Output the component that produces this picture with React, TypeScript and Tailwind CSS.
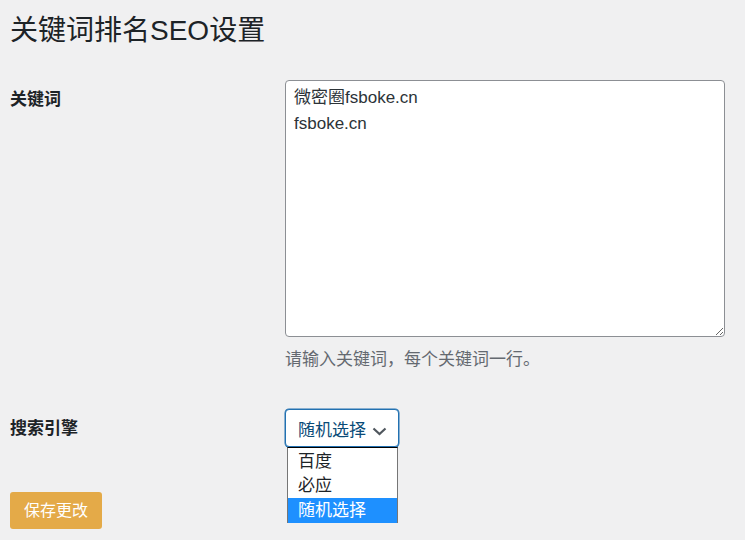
import React from "react";

const font = { fontFamily: '"Liberation Sans","Noto Sans CJK SC",sans-serif' };

export default function App() {
  return (
    <div
      className="relative w-full h-[540px] overflow-hidden bg-[#f0f0f1] px-[10px] text-[#1d2327]"
      style={font}
    >
      <h1 className="pt-[13px] text-[28px] leading-[36px] font-normal">关键词排名SEO设置</h1>

      <div className="mt-[31px] flex">
        <div className="w-[275px] shrink-0 pt-[9px] text-[17px] leading-[22px] font-bold">关键词</div>
        <div className="flex flex-col">
          <textarea
            readOnly
            defaultValue={"微密圈fsboke.cn\nfsboke.cn"}
            className="w-[440px] h-[257px] rounded-[4px] border border-[#8c8f94] bg-white px-[8px] pt-[4px] text-[17px] leading-[26px] text-[#2c3338] outline-none resize"
            style={font}
          />
          <p className="mt-[11px] text-[17px] leading-[24px] text-[#646970]">请输入关键词，每个关键词一行。</p>
        </div>
      </div>

      <div className="mt-[37px] flex">
        <div className="w-[275px] shrink-0 pt-[9px] text-[17px] leading-[22px] font-bold">搜索引擎</div>
        <div className="relative">
          <div className="flex h-[38px] w-[114px] items-center rounded-[4px] border border-[#2271b1] bg-white pt-[6px] pl-[12px] pr-[10px] text-[17px] text-[#0a4b78] shadow-[0_0_0_0.5px_#2271b1]">
            <span className="leading-[22px]">随机选择</span>
            <svg className="ml-[6px]" width="15" height="9" viewBox="0 0 15 9" fill="none">
              <path d="M1.5 1.5 L7.5 7 L13.5 1.5" stroke="#50575e" strokeWidth="2.2" />
            </svg>
          </div>
          <div className="absolute left-[2px] top-[38px] w-[111px] border-x border-t border-x-[#767676] border-t-black bg-white text-[17px] text-[#1d2327]">
            <div className="h-[25px] pl-[10px] pt-[1px] leading-[25px]">百度</div>
            <div className="h-[25px] pl-[10px] leading-[25px]">必应</div>
            <div className="h-[25px] bg-[#1e90ff] pl-[10px] leading-[25px] text-white">随机选择</div>
          </div>
        </div>
      </div>

      <button className="mt-[45px] flex h-[37px] w-[92px] items-center justify-center rounded-[3px] bg-[#e4aa48] text-[16px] text-white">
        保存更改
      </button>
    </div>
  );
}
